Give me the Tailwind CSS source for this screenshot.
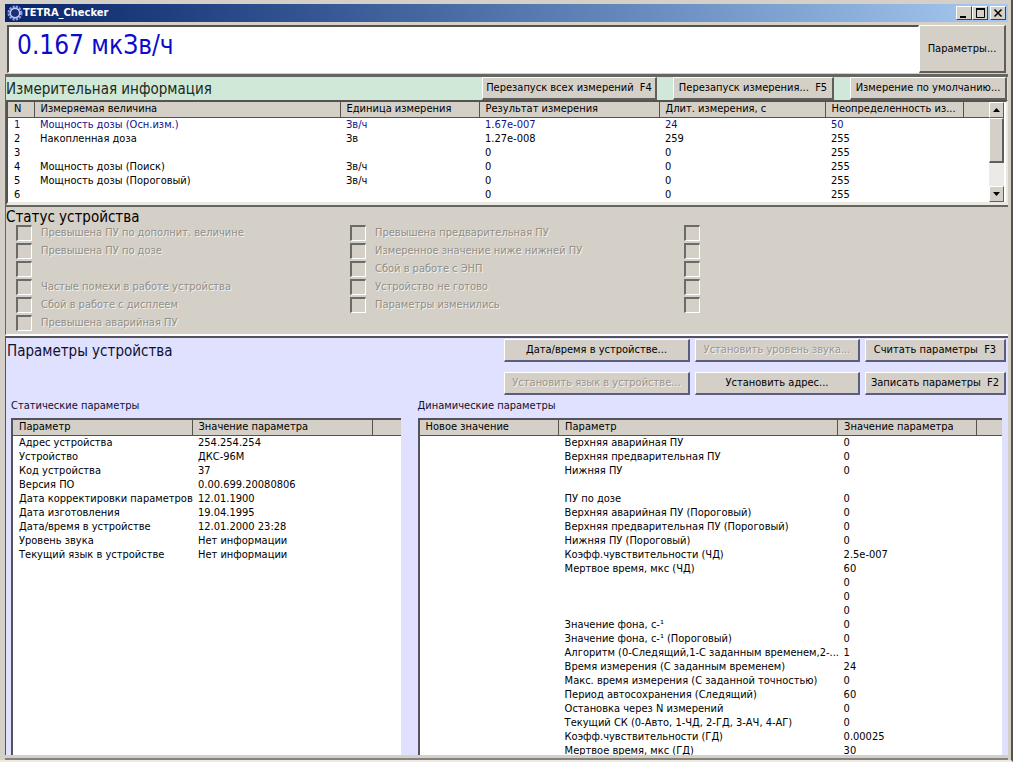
<!DOCTYPE html>
<html lang="ru">
<head>
<meta charset="utf-8">
<title>TETRA_Checker</title>
<script src="https://cdn.jsdelivr.net/npm/@tailwindcss/browser@4"></script>
</head>
<body class="h-screen overflow-hidden bg-[#d4d0c8] font-['DejaVu_Sans_Condensed','DejaVu_Sans',sans-serif] text-[11px] leading-[14px] text-black">
<div class="flex h-full flex-col border-r-2 border-b-2 border-r-[#55534f] border-b-[#ece9e2] pt-1 pr-[3px] pl-[5px]">
  <header class="flex h-[18px] shrink-0 items-center bg-linear-to-r from-[#0a246a] to-[#a6caf0] pr-[2px] pl-[2px]">
    <svg class="size-4" viewBox="0 0 16 16" fill="none"><circle cx="8" cy="8" r="6.2" stroke="#8f9be0" stroke-width="2.6" stroke-dasharray="2.2 1.05"/><circle cx="8" cy="8" r="4.6" stroke="#c3caf5" stroke-width="1.6"/><circle cx="8" cy="8" r="3.6" fill="#1a2f78"/></svg>
    <h1 class="flex-1 text-[11px] font-bold text-white">TETRA_Checker</h1>
    <button aria-label="Свернуть" class="flex h-[14px] w-4 items-center justify-center border border-t-white border-r-[#404040] border-b-[#404040] border-l-white bg-[#d4d0c8]"><svg class="h-3 w-3" viewBox="0 0 12 12"><path d="M2 9h6v2H2z"/></svg></button>
    <button aria-label="Развернуть" class="flex h-[14px] w-4 items-center justify-center border border-t-white border-r-[#404040] border-b-[#404040] border-l-white bg-[#d4d0c8]"><svg class="h-3 w-3" viewBox="0 0 12 12" fill="none" stroke="#000"><path d="M2.500 2v8.500h8V2M2 2h9"/><path d="M2 2h9" stroke-width="2"/></svg></button>
    <button aria-label="Закрыть" class="ml-[2px] flex h-[14px] w-4 items-center justify-center border border-t-white border-r-[#404040] border-b-[#404040] border-l-white bg-[#d4d0c8]"><svg class="h-3 w-3" viewBox="0 0 12 12" stroke="#000" stroke-width="1.500"><path d="M2.500 2.500l7 7M9.500 2.500l-7 7"/></svg></button>
  </header>

  <section class="mt-[3px] flex h-[48px] shrink-0 pr-[2px] pl-[2px]">
    <output class="flex-1 border-t-2 border-r border-b border-l-2 border-t-[#55534f] border-r-white border-b-white border-l-[#55534f] bg-white pl-2 text-[26px] leading-[36px] text-[#0c0ccc]">0.167 мкЗв/ч</output>
    <button class="w-[87px] border-t border-r-2 border-b-2 border-l border-t-white border-r-[#605e5a] border-b-[#605e5a] border-l-white bg-[#d4d0c8]">Параметры...</button>
  </section>

  <section class="mt-px flex h-[131px] shrink-0 flex-col border-t-[3px] border-l border-t-[#666660] border-l-[#666660] bg-[#d0e8d8]">
    <div class="flex h-[23px] shrink-0 pr-px">
      <h2 class="flex-1 text-[15px] leading-[25px] text-[#202820]">Измерительная информация</h2>
      <button class="mr-4 h-[23px] w-[175px] border-t border-r-2 border-b-2 border-l border-t-white border-r-[#605e5a] border-b-[#605e5a] border-l-white bg-[#d4d0c8]">Перезапуск всех измерений&nbsp; F4</button>
      <button class="mr-4 h-[23px] w-[161px] border-t border-r-2 border-b-2 border-l border-t-white border-r-[#605e5a] border-b-[#605e5a] border-l-white bg-[#d4d0c8]">Перезапуск измерения...&nbsp; F5</button>
      <button class="h-[23px] w-[157px] border-t border-r-2 border-b-2 border-l border-t-white border-r-[#605e5a] border-b-[#605e5a] border-l-white bg-[#d4d0c8]">Измерение по умолчанию...</button>
    </div>
    <div class="flex min-h-0 flex-1 overflow-hidden border-t-2 border-r-2 border-b-3 border-l-2 border-t-[#55534f] border-r-[#ece9e2] border-b-[#ece9e2] border-l-[#55534f] bg-white">
      <div class="min-w-0 flex-1 overflow-hidden">
        <table class="w-full table-fixed border-collapse text-left whitespace-nowrap [&_td]:h-[14px] [&_td]:p-0 [&_td]:pl-[6px] [&_th]:h-[15px] [&_th]:border-r [&_th]:border-b [&_th]:border-[#55534f] [&_th]:bg-[#d4d0c8] [&_th]:p-0 [&_th]:pl-[6px] [&_th]:font-normal [&_th:last-child]:border-r-0">
          <colgroup><col class="w-[26px]"><col class="w-[306px]"><col class="w-[139px]"><col class="w-[180px]"><col class="w-[166px]"><col class="w-[138px]"><col></colgroup>
          <thead><tr><th>N</th><th>Измеряемая величина</th><th>Единица измерения</th><th>Результат измерения</th><th>Длит. измерения, с</th><th>Неопределенность из...</th><th></th></tr></thead>
          <tbody>
            <tr class="text-[#10108c]"><td>1</td><td>Мощность дозы (Осн.изм.)</td><td>Зв/ч</td><td>1.67e-007</td><td>24</td><td>50</td><td></td></tr>
            <tr><td>2</td><td>Накопленная доза</td><td>Зв</td><td>1.27e-008</td><td>259</td><td>255</td><td></td></tr>
            <tr><td>3</td><td></td><td></td><td>0</td><td>0</td><td>255</td><td></td></tr>
            <tr><td>4</td><td>Мощность дозы (Поиск)</td><td>Зв/ч</td><td>0</td><td>0</td><td>255</td><td></td></tr>
            <tr><td>5</td><td>Мощность дозы (Пороговый)</td><td>Зв/ч</td><td>0</td><td>0</td><td>255</td><td></td></tr>
            <tr><td>6</td><td></td><td></td><td>0</td><td>0</td><td>255</td><td></td></tr>
          </tbody>
        </table>
      </div>
      <div class="flex w-[17px] flex-col border-r-2 border-white bg-[#eceae6]">
        <button aria-label="Вверх" class="flex h-4 items-center justify-center border border-t-white border-r-[#605e5a] border-b-[#605e5a] border-l-white bg-[#d4d0c8]"><svg class="h-1 w-[7px]" viewBox="0 0 7 4"><path d="M0 4h7L3.500 0z"/></svg></button>
        <div class="h-[45px] border-t border-r-2 border-b-2 border-l border-t-white border-r-[#605e5a] border-b-[#605e5a] border-l-white bg-[#d4d0c8]"></div>
        <button aria-label="Вниз" class="mt-auto flex h-4 items-center justify-center border border-t-white border-r-[#605e5a] border-b-[#605e5a] border-l-white bg-[#d4d0c8]"><svg class="h-1 w-[7px]" viewBox="0 0 7 4"><path d="M0 0h7L3.500 4z"/></svg></button>
      </div>
    </div>
  </section>

  <section class="h-[131px] shrink-0 border-t-2 border-b-2 border-l border-t-[#666660] border-b-white border-l-[#666660]">
    <h2 class="h-[17px] text-[15px] leading-[20px]">Статус устройства</h2>
    <div class="grid grid-cols-[334fr_334fr_324fr] pl-[10px] text-[#908e88] [text-shadow:1px_1px_0_#f4f2ee] [&_input]:mr-[9px] [&_input]:size-4 [&_input]:appearance-none [&_input]:border-t-2 [&_input]:border-r [&_input]:border-b [&_input]:border-l-2 [&_input]:border-t-[#6c6a66] [&_input]:border-r-white [&_input]:border-b-white [&_input]:border-l-[#6c6a66] [&_label]:flex [&_label]:h-[18px] [&_label]:items-center">
      <div>
        <label><input type="checkbox" disabled>Превышена ПУ по дополнит. величине</label>
        <label><input type="checkbox" disabled>Превышена ПУ по дозе</label>
        <label><input type="checkbox" disabled aria-label="Резерв 1"></label>
        <label><input type="checkbox" disabled>Частые помехи в работе устройства</label>
        <label><input type="checkbox" disabled>Сбой в работе с дисплеем</label>
        <label><input type="checkbox" disabled>Превышена аварийная ПУ</label>
      </div>
      <div>
        <label><input type="checkbox" disabled>Превышена предварительная ПУ</label>
        <label><input type="checkbox" disabled>Измеренное значение ниже нижней ПУ</label>
        <label><input type="checkbox" disabled>Сбой в работе с ЭНП</label>
        <label><input type="checkbox" disabled>Устройство не готово</label>
        <label><input type="checkbox" disabled>Параметры изменились</label>
      </div>
      <div>
        <label><input type="checkbox" disabled aria-label="Резерв 2"></label>
        <label><input type="checkbox" disabled aria-label="Резерв 3"></label>
        <label><input type="checkbox" disabled aria-label="Резерв 4"></label>
        <label><input type="checkbox" disabled aria-label="Резерв 5"></label>
        <label><input type="checkbox" disabled aria-label="Резерв 6"></label>
      </div>
    </div>
  </section>

  <section class="flex min-h-0 flex-1 flex-col border-t-2 border-l border-t-[#55535a] border-l-[#55535a] bg-[#e0e0ff]">
    <div class="flex shrink-0 items-start pt-px pr-[2px]">
      <h2 class="flex-1 pl-px text-[15px] leading-[24px] text-[#101030]">Параметры устройства</h2>
      <div class="grid grid-cols-[186px_165px_141px] gap-x-[5px] gap-y-[10px] [&_button]:h-[23px] [&_button]:border-t [&_button]:border-r-2 [&_button]:border-b-2 [&_button]:border-l [&_button]:border-t-white [&_button]:border-r-[#5c5c80] [&_button]:border-b-[#5c5c80] [&_button]:border-l-white [&_button]:bg-[#d4d0c8] [&_button:disabled]:text-[#989690] [&_button:disabled]:[text-shadow:1px_1px_0_#f4f2ee]">
        <button>Дата/время в устройстве...</button>
        <button disabled>Установить уровень звука...</button>
        <button>Считать параметры&nbsp; F3</button>
        <button disabled>Установить язык в устройстве...</button>
        <button>Установить адрес...</button>
        <button>Записать параметры&nbsp; F2</button>
      </div>
    </div>
    <div class="grid min-h-0 flex-1 grid-cols-[2fr_3fr] gap-x-[17px] pt-1 pr-[6px] pl-[5px]">
      <div class="flex min-h-0 flex-col">
        <h3 class="h-[19px] leading-[14px] text-[#101030]">Статические параметры</h3>
        <div class="min-h-0 flex-1 overflow-hidden border-t-2 border-l-2 border-[#55535a] bg-white">
          <table class="w-full table-fixed border-collapse text-left whitespace-nowrap [&_td]:h-[14px] [&_td]:p-0 [&_td]:pl-[6px] [&_th]:h-[15px] [&_th]:border-r [&_th]:border-b [&_th]:border-[#55534f] [&_th]:bg-[#d4d0c8] [&_th]:p-0 [&_th]:pl-[6px] [&_th]:font-normal [&_th:last-child]:border-r-0">
            <colgroup><col class="w-[179px]"><col class="w-[180px]"><col></colgroup>
            <thead><tr><th>Параметр</th><th>Значение параметра</th><th></th></tr></thead>
            <tbody>
              <tr><td>Адрес устройства</td><td>254.254.254</td></tr>
              <tr><td>Устройство</td><td>ДКС-96М</td></tr>
              <tr><td>Код устройства</td><td>37</td></tr>
              <tr><td>Версия ПО</td><td>0.00.699.20080806</td></tr>
              <tr><td>Дата корректировки параметров</td><td>12.01.1900</td></tr>
              <tr><td>Дата изготовления</td><td>19.04.1995</td></tr>
              <tr><td>Дата/время в устройстве</td><td>12.01.2000 23:28</td></tr>
              <tr><td>Уровень звука</td><td>Нет информации</td></tr>
              <tr><td>Текущий язык в устройстве</td><td>Нет информации</td></tr>
            </tbody>
          </table>
        </div>
      </div>
      <div class="flex min-h-0 flex-col">
        <h3 class="h-[19px] leading-[14px] text-[#101030]">Динамические параметры</h3>
        <div class="min-h-0 flex-1 overflow-hidden border-t-2 border-l-2 border-[#55535a] bg-white">
          <table class="w-full table-fixed border-collapse text-left whitespace-nowrap [&_td]:h-[14px] [&_td]:p-0 [&_td]:pl-[6px] [&_th]:h-[15px] [&_th]:border-r [&_th]:border-b [&_th]:border-[#55534f] [&_th]:bg-[#d4d0c8] [&_th]:p-0 [&_th]:pl-[6px] [&_th]:font-normal [&_th:last-child]:border-r-0">
            <colgroup><col class="w-[139px]"><col class="w-[279px]"><col class="w-[139px]"><col></colgroup>
            <thead><tr><th>Новое значение</th><th>Параметр</th><th>Значение параметра</th><th></th></tr></thead>
            <tbody>
              <tr><td></td><td>Верхняя аварийная ПУ</td><td>0</td></tr>
              <tr><td></td><td>Верхняя предварительная ПУ</td><td>0</td></tr>
              <tr><td></td><td>Нижняя ПУ</td><td>0</td></tr>
              <tr><td></td><td></td><td></td></tr>
              <tr><td></td><td>ПУ по дозе</td><td>0</td></tr>
              <tr><td></td><td>Верхняя аварийная ПУ (Пороговый)</td><td>0</td></tr>
              <tr><td></td><td>Верхняя предварительная ПУ (Пороговый)</td><td>0</td></tr>
              <tr><td></td><td>Нижняя ПУ (Пороговый)</td><td>0</td></tr>
              <tr><td></td><td>Коэфф.чувствительности (ЧД)</td><td>2.5e-007</td></tr>
              <tr><td></td><td>Мертвое время, мкс (ЧД)</td><td>60</td></tr>
              <tr><td></td><td></td><td>0</td></tr>
              <tr><td></td><td></td><td>0</td></tr>
              <tr><td></td><td></td><td>0</td></tr>
              <tr><td></td><td>Значение фона, с-¹</td><td>0</td></tr>
              <tr><td></td><td>Значение фона, с-¹ (Пороговый)</td><td>0</td></tr>
              <tr><td></td><td>Алгоритм (0-Следящий,1-С заданным временем,2-...</td><td>1</td></tr>
              <tr><td></td><td>Время измерения (С заданным временем)</td><td>24</td></tr>
              <tr><td></td><td>Макс. время измерения (С заданной точностью)</td><td>0</td></tr>
              <tr><td></td><td>Период автосохранения (Следящий)</td><td>60</td></tr>
              <tr><td></td><td>Остановка через N измерений</td><td>0</td></tr>
              <tr><td></td><td>Текущий СК (0-Авто, 1-ЧД, 2-ГД, 3-АЧ, 4-АГ)</td><td>0</td></tr>
              <tr><td></td><td>Коэфф.чувствительности (ГД)</td><td>0.00025</td></tr>
              <tr><td></td><td>Мертвое время, мкс (ГД)</td><td>30</td></tr>
            </tbody>
          </table>
        </div>
      </div>
    </div>
  </section>
  <footer class="h-[5px] shrink-0 border-b-2 border-[#85837e]"></footer>
</div>
</body>
</html>
